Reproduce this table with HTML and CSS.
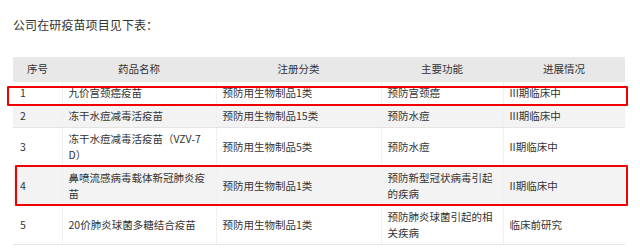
FILE: index.html
```html
<!DOCTYPE html>
<html lang="zh-CN">
<head>
<meta charset="utf-8">
<link rel="stylesheet" href="styles.css">
</head>
<body>
<p class="intro">公司在研疫苗项目见下表：</p>
<div class="table-wrap">
  <table class="vaccines">
    <colgroup>
      <col class="c1"><col class="c2"><col class="c3"><col class="c4"><col class="c5">
    </colgroup>
    <thead>
      <tr><th>序号</th><th>药品名称</th><th>注册分类</th><th>主要功能</th><th>进展情况</th></tr>
    </thead>
    <tbody>
      <tr><td>1</td><td>九价宫颈癌疫苗</td><td>预防用生物制品1类</td><td>预防宫颈癌</td><td>III期临床中</td></tr>
      <tr><td>2</td><td>冻干水痘减毒活疫苗</td><td>预防用生物制品15类</td><td>预防水痘</td><td>III期临床中</td></tr>
      <tr><td>3</td><td>冻干水痘减毒活疫苗（VZV-7D）</td><td>预防用生物制品5类</td><td>预防水痘</td><td>II期临床中</td></tr>
      <tr><td>4</td><td>鼻喷流感病毒载体新冠肺炎疫苗</td><td>预防用生物制品1类</td><td>预防新型冠状病毒引起的疾病</td><td>II期临床中</td></tr>
      <tr><td>5</td><td>20价肺炎球菌多糖结合疫苗</td><td>预防用生物制品1类</td><td>预防肺炎球菌引起的相关疾病</td><td>临床前研究</td></tr>
    </tbody>
  </table>
  <div class="mark mark-1"></div>
  <div class="mark mark-2"></div>
</div>
</body>
</html>
```

FILE: styles.css
```css
html, body {
  margin: 0;
  padding: 0;
  background: #ffffff;
}
body {
  padding: 16px 15px 0 13px;
  font-family: "Noto Sans CJK SC", "Noto Sans", sans-serif;
  color: #333333;
}
.intro {
  margin: 0;
  font-size: 12px;
  line-height: 17px;
  letter-spacing: 0.1px;
  color: #333333;
}
.table-wrap {
  position: relative;
  margin-top: 24px;
  width: 612px;
}
.vaccines {
  width: 612px;
  table-layout: fixed;
  border-collapse: collapse;
  font-size: 10.5px;
  line-height: 16px;
}
.c1 { width: 49px; }
.c2 { width: 154px; }
.c3 { width: 165px; }
.c4 { width: 122px; }
.c5 { width: 122px; }
.vaccines th {
  background: #e8e8e8;
  font-weight: normal;
  color: #333333;
  text-align: center;
  padding: 4px 6px 5px;
}
.vaccines td {
  padding: 3px 6px;
  text-align: left;
  vertical-align: middle;
  border-bottom: 1px solid #e4e4e4;
  border-left: 1px solid #f0f0f0;
  word-break: break-all;
}
.vaccines td:first-child {
  border-left: none;
  padding-left: 7px;
}
.vaccines tbody tr:nth-child(even) td {
  background: #f3f3f3;
}
.mark {
  position: absolute;
  border: 2px solid #f00000;
  border-radius: 1px;
  box-sizing: border-box;
  pointer-events: none;
}
.mark-1 {
  left: -6px;
  top: 29px;
  width: 621px;
  height: 20px;
}
.mark-2 {
  left: 2px;
  top: 108px;
  width: 613px;
  height: 41px;
}
```
